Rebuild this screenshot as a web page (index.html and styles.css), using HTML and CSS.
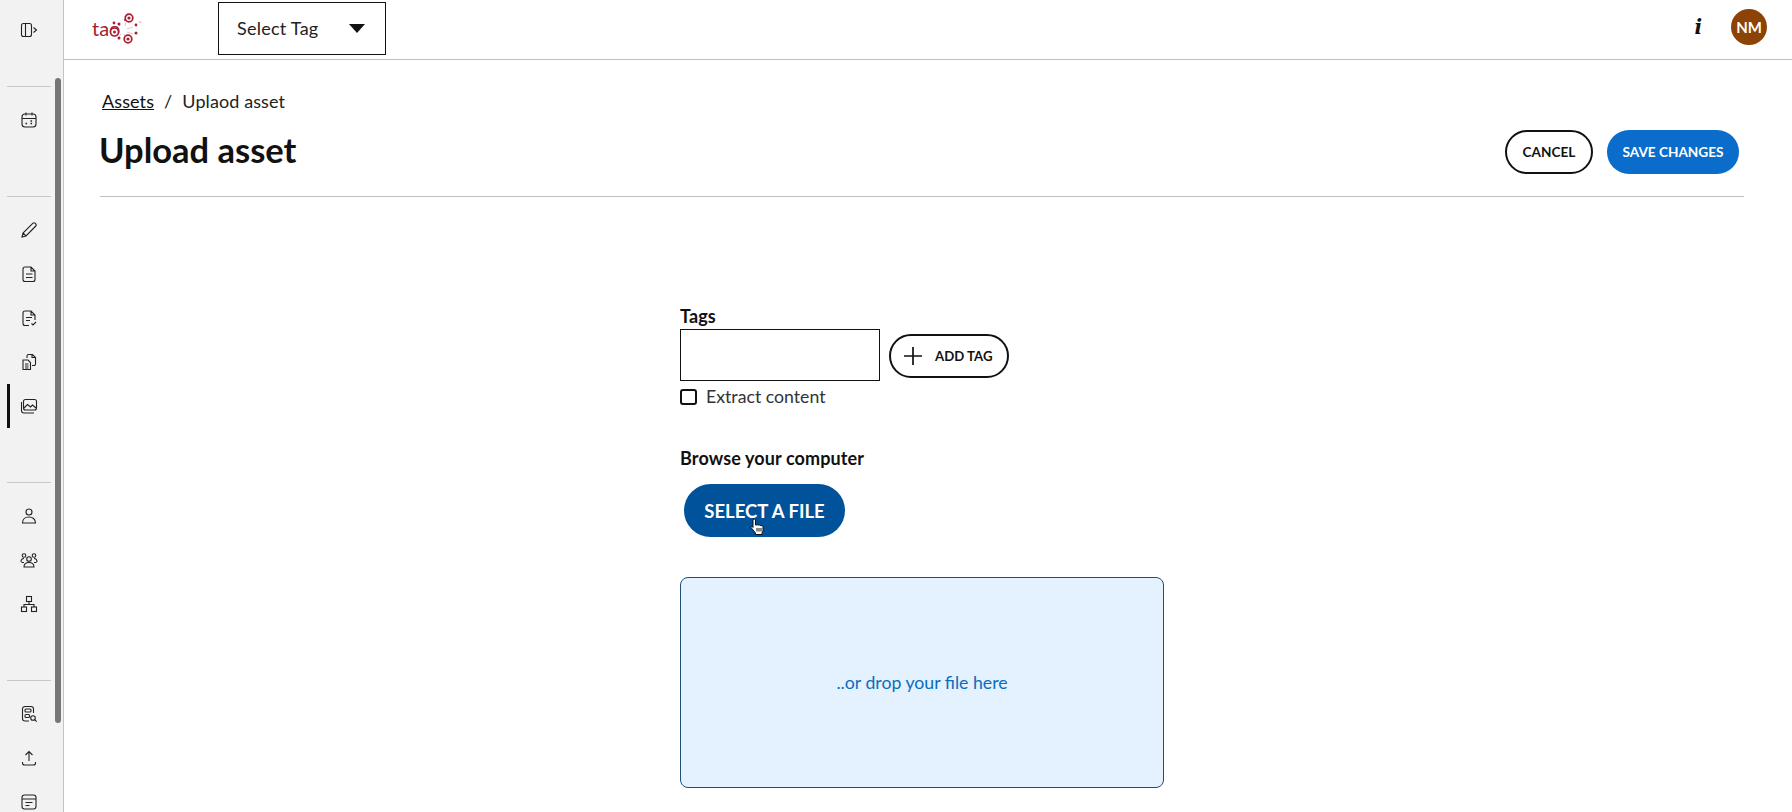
FILE: index.html
```html
<!DOCTYPE html>
<html lang="en">
  <head>
    <meta charset="UTF-8">
    <meta name="viewport" content="width=device-width, initial-scale=1.0">
    <title>Upload asset</title>
    <link rel="stylesheet" href="styles.css">
  </head>
  <body>
    <div class="app">
      <nav class="sidebar">
        <div class="side-top">
          <svg class="icon" viewBox="0 0 18 18"><rect x="1.500" y="2.500" width="10" height="13" rx="2"/><path d="M5.500 2.500v13M13.500 6.500l3 2.500-3 2.500"/></svg>
        </div>
        <div class="side-group">
          <a class="side-item"><svg class="icon" viewBox="0 0 18 18"><rect x="2" y="3" width="14" height="13" rx="3"/><path d="M2 7.500h14M6 1.500v3M12 1.500v3"/><path class="dots" d="M5.500 12.500h2M10.500 12.500h2M10.500 10h2"/></svg></a>
        </div>
        <div class="side-group">
          <a class="side-item"><svg class="icon" viewBox="0 0 18 18"><path d="M2 16l1-4L13 2.200c.6-.6 1.500-.6 2 0l.8.8c.6.6.6 1.400 0 2L6 15zM3 12l3 3"/></svg></a>
          <a class="side-item"><svg class="icon" viewBox="0 0 18 18"><path d="M5 2h6l4 4v8.500a2 2 0 0 1-2 2H5a2 2 0 0 1-2-2V4a2 2 0 0 1 2-2zM11 2v4h4M6 9h6.500M6 12.500h6.500"/></svg></a>
          <a class="side-item"><svg class="icon" viewBox="0 0 18 18"><path d="M9 16.500H5a2 2 0 0 1-2-2V4a2 2 0 0 1 2-2h6l4 4v5M11 2v4h4M6 8.500h6M6 11.500h4M11.500 14.500l1.500 1.500 3-3"/></svg></a>
          <a class="side-item"><svg class="icon" viewBox="0 0 18 18"><path d="M7 5V3a1.500 1.500 0 0 1 1.500-1.500h4l3 3V11a1.500 1.500 0 0 1-1.500 1.500h-2M12 1.500v3h3.500M3 7h5l2.500 2.500V16.500H3zM5 11h3.500M5 13h3.500M5 15h3.500"/></svg></a>
          <a class="side-item active"><svg class="icon" viewBox="0 0 18 18"><rect x="3.500" y="2.500" width="13" height="10.500" rx="2"/><path d="M1.500 5v8.500a2.500 2.500 0 0 0 2.500 2.500h10M4 11l3.500-3.500 3 2.500 2-2 3.500 3"/></svg></a>
        </div>
        <div class="side-group">
          <a class="side-item"><svg class="icon" viewBox="0 0 18 18"><circle cx="9" cy="5" r="3"/><path d="M2.500 16c0-4 3-6 6.500-6s6.500 2 6.500 6z"/></svg></a>
          <a class="side-item"><svg class="icon" viewBox="0 0 18 18"><circle cx="9" cy="8" r="2.300"/><circle cx="4" cy="4.500" r="1.800"/><circle cx="14" cy="4.500" r="1.800"/><path d="M4 16c0-3 2-4.500 5-4.500s5 1.500 5 4.500zM1 11c0-2 1-3.500 3-3.500M17 11c0-2-1-3.500-3-3.500M1.500 11.500H4M14 11.500h2.500"/></svg></a>
          <a class="side-item"><svg class="icon" viewBox="0 0 18 18"><rect x="6.500" y="1.500" width="5" height="5"/><rect x="1.500" y="12" width="5" height="4.500"/><rect x="11.500" y="12" width="5" height="4.500"/><path d="M9 6.500v3M4 12V9.500h10V12"/></svg></a>
        </div>
        <div class="side-group">
          <a class="side-item"><svg class="icon" viewBox="0 0 18 18"><path d="M9 16H5a2.500 2.500 0 0 1-2.500-2.500V4A2.500 2.500 0 0 1 5 1.500h6A2.500 2.500 0 0 1 13.500 4v4"/><rect x="5" y="4" width="6" height="3" rx="1"/><rect x="5" y="9.500" width="4.500" height="3" rx="1"/><circle cx="13" cy="13" r="2.300"/><path d="M14.700 14.700l2 2"/></svg></a>
          <a class="side-item"><svg class="icon" viewBox="0 0 18 18"><path d="M9 12V2.500M5.500 6L9 2.500 12.500 6M2.500 13v1a2 2 0 0 0 2 2h9a2 2 0 0 0 2-2v-1"/></svg></a>
          <a class="side-item"><svg class="icon" viewBox="0 0 18 18"><rect x="2" y="2" width="14" height="14" rx="2.500"/><path d="M2 6h14M5.500 9.500h7M5.500 12.500h4"/></svg></a>
        </div>
        <div class="side-thumb"></div>
      </nav>

      <div class="main">
        <header class="topbar">
          <svg class="logo" viewBox="0 0 52 34">
            <text class="logo-text" x="0" y="24">tao</text>
            <path class="logo-rays" d="M28 14l-2-3M33 14l1-4M35 17l6-2M35 20l6 2M32 22l1 3M29 22l-2 3"/>
            <g class="logo-rings">
              <circle cx="37" cy="6" r="3.800"/>
              <circle cx="36" cy="27" r="3.800"/>
              <circle cx="22.500" cy="20" r="4"/>
            </g>
            <g class="logo-dots">
              <circle cx="37" cy="6" r="1.600"/>
              <circle cx="36" cy="27" r="1.600"/>
              <circle cx="22.500" cy="20" r="1.500"/>
              <circle cx="22" cy="11" r="1.400"/>
              <circle cx="27" cy="12" r="1.500"/>
              <circle cx="33" cy="8" r="1"/>
              <circle cx="44" cy="13" r="1.400"/>
              <circle cx="44" cy="21" r="1.500"/>
              <circle cx="27" cy="26" r="1.500"/>
              <circle cx="48" cy="10" r=".6"/>
            </g>
          </svg>
          <div class="tag-select">
            <span>Select Tag</span>
            <span class="caret"></span>
          </div>
          <div class="top-right">
            <span class="info">i</span>
            <span class="avatar">NM</span>
          </div>
        </header>

        <main class="content">
          <div class="crumbs">
            <a href="#">Assets</a>
            <span class="crumb-sep">/</span>
            <span>Uplaod asset</span>
          </div>
          <div class="title-row">
            <h1>Upload asset</h1>
            <div class="actions">
              <button class="btn btn-outline">CANCEL</button>
              <button class="btn btn-primary">SAVE CHANGES</button>
            </div>
          </div>

          <form class="upload-form">
            <label class="field-label">Tags</label>
            <div class="tag-row">
              <input type="text" class="tag-input">
              <button type="button" class="btn btn-outline btn-add">
                <svg class="plus" viewBox="0 0 18 18"><path d="M9 0v18M0 9h18"/></svg>
                ADD TAG
              </button>
            </div>
            <label class="check-row"><span class="checkbox"></span>Extract content</label>

            <div class="field-label browse-label">Browse your computer</div>
            <div class="select-wrap">
              <button type="button" class="select-file">SELECT A FILE</button>
              <svg class="cursor" viewBox="0 0 14 17"><path d="M3.500 1L5 1L5.500 2L5.500 7L7.500 6.800L8 7L9.800 7L10.300 7.500L12 7.700L13 8.700L13 13L12 15L12 16.500L5.500 16.500L5.500 15L1 9.500L1.200 8.500L2.500 8.500L3 9.500L3 2Z"/><path class="cursor-lines" d="M7 10v3.500M9 10v3.500M11 10v3.500"/></svg>
            </div>

            <div class="dropzone">..or drop your file here</div>
          </form>
        </main>
      </div>
    </div>
  </body>
</html>
```

FILE: styles.css
```css
* {
    box-sizing: border-box;
}
html, body {
    margin: 0;
    height: 100%;
    overflow: hidden;
}
body {
    font-family: Lato, "Noto Sans", Arial, sans-serif;
    color: #111;
    background: #fff;
}
.app {
    display: flex;
    height: 812px;
    overflow: hidden;
}

/* sidebar */
.sidebar {
    position: relative;
    width: 64px;
    flex-shrink: 0;
    background-color: #f2f2f2;
    border-right: 1px solid #c4c4c4;
    overflow: hidden;
}
.side-top {
    height: 86px;
    padding-top: 21px;
    padding-left: 20px;
}
.side-group {
    margin-left: 7px;
    width: 44px;
    border-top: 1px solid #c8c8c8;
    padding-top: 11px;
    padding-bottom: 54px;
}
.side-item {
    position: relative;
    display: flex;
    align-items: center;
    justify-content: center;
    height: 44px;
}
.side-item.active::before {
    content: "";
    position: absolute;
    left: 0;
    top: 0;
    bottom: 0;
    width: 3px;
    background-color: #111;
}
.icon {
    width: 18px;
    height: 18px;
    fill: none;
    stroke: #222;
    stroke-width: 1.100;
}
.icon .dots {
    stroke-width: 1.600;
    stroke-dasharray: 1.600 .8;
}
.side-thumb {
    position: absolute;
    left: 55px;
    top: 78px;
    width: 6px;
    height: 645px;
    border-radius: 3px;
    background-color: #767676;
}

/* top bar */
.main {
    flex: 1;
    min-width: 0;
}
.topbar {
    display: flex;
    align-items: center;
    height: 60px;
    border-bottom: 1px solid #c0c0c0;
    padding-left: 28px;
    padding-right: 25px;
}
.logo {
    width: 52px;
    height: 34px;
    margin-top: -1px;
}
.logo-text {
    font-family: Lato, sans-serif;
    font-size: 20px;
    fill: #a3212f;
}
.logo-rays {
    fill: none;
    stroke: #e3a5ad;
    stroke-width: .7;
}
.logo-rings circle {
    fill: #fff;
    stroke: #ab1f33;
    stroke-width: 1.700;
}
.logo-dots circle {
    fill: #ab1f33;
}
.tag-select {
    display: flex;
    align-items: center;
    justify-content: space-between;
    width: 168px;
    height: 53px;
    margin-left: 74px;
    margin-top: -3px;
    border: 1.500px solid #111;
    padding-left: 18px;
    padding-right: 20px;
    font-size: 18px;
    letter-spacing: .25px;
    color: #222;
}
.caret {
    width: 0;
    height: 0;
    border-left: 8.500px solid transparent;
    border-right: 8.500px solid transparent;
    border-top: 9px solid #111;
}
.top-right {
    display: flex;
    align-items: center;
    gap: 29px;
    margin-left: auto;
    margin-top: -5px;
}
.info {
    font-family: "DejaVu Serif", serif;
    font-weight: bold;
    font-style: italic;
    font-size: 20px;
}
.avatar {
    display: flex;
    align-items: center;
    justify-content: center;
    width: 36px;
    height: 36px;
    border-radius: 50%;
    background-color: #8c4305;
    color: #fff;
    font-size: 15px;
    font-weight: bold;
}

/* page content */
.content {
    padding-left: 36px;
    padding-right: 48px;
}
.crumbs {
    display: flex;
    align-items: center;
    height: 24px;
    margin-top: 29px;
    font-size: 18px;
    letter-spacing: .1px;
    color: #222;
    padding-left: 2px;
}
.crumbs a {
    color: #111;
}
.crumb-sep {
    margin-left: 10px;
    margin-right: 10px;
}
.title-row {
    display: flex;
    align-items: center;
    justify-content: space-between;
    height: 84px;
    border-bottom: 1px solid #c0c0c0;
    padding-bottom: 8px;
    padding-right: 5px;
}
h1 {
    margin: 0 0 2px -1px;
    font-size: 34.500px;
    font-weight: bold;
    color: #111;
}
.actions {
    display: flex;
    gap: 14px;
    margin-top: 3px;
}
.btn {
    height: 44px;
    border-radius: 22px;
    font-family: inherit;
    font-size: 13.600px;
    font-weight: bold;
}
.btn-outline {
    background: #fff;
    border: 2px solid #111;
    color: #111;
    width: 88px;
}
.btn-primary {
    background-color: #0a6dcc;
    border: none;
    color: #fff;
    width: 132px;
}

/* form */
.upload-form {
    width: 484px;
    margin: 0 auto;
    padding-top: 108px;
}
.field-label {
    display: block;
    font-size: 18px;
    font-weight: bold;
    line-height: 22px;
    letter-spacing: .12px;
    color: #111;
}
.tag-row {
    display: flex;
    align-items: center;
    gap: 9px;
    margin-top: 2px;
}
.tag-input {
    width: 200px;
    height: 52px;
    border: 1.500px solid #111;
    border-radius: 0;
    background: #fff;
}
.btn-add {
    display: flex;
    align-items: center;
    width: 120px;
    padding-left: 13px;
    gap: 13px;
    margin-top: 2px;
    font-size: 13.200px;
}
.plus {
    width: 18px;
    height: 18px;
    fill: none;
    stroke: #111;
    stroke-width: 1.700;
}
.check-row {
    display: flex;
    align-items: center;
    gap: 9px;
    margin-top: 4px;
    margin-bottom: 1px;
    font-size: 17.700px;
    line-height: 24px;
    color: #333;
}
.checkbox {
    width: 17px;
    height: 16px;
    border: 2px solid #111;
    border-radius: 3px;
}
.browse-label {
    margin-top: 38px;
}
.select-wrap {
    position: relative;
    width: 165px;
    margin-top: 15px;
    padding-left: 4px;
}
.select-file {
    display: block;
    width: 161px;
    height: 53px;
    border: none;
    border-radius: 27px;
    background-color: #00529b;
    color: #fff;
    font-family: inherit;
    font-size: 18.500px;
    font-weight: bold;
    padding-bottom: 1px;
}
.cursor {
    position: absolute;
    left: 70px;
    top: 34px;
    width: 14px;
    height: 17px;
    fill: #fff;
    stroke: #111;
    stroke-width: 1;
}
.cursor-lines {
    fill: none;
}
.dropzone {
    display: flex;
    align-items: center;
    justify-content: center;
    height: 211px;
    margin-top: 40px;
    padding-bottom: 1px;
    border: 1px solid #1f4e79;
    border-radius: 8px;
    background-color: #e4f1fe;
    color: #0a6dbd;
    font-size: 17.700px;
}
```
